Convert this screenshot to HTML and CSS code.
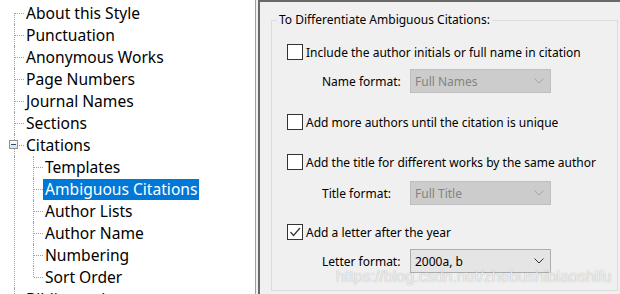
FILE: index.html
```html
<!DOCTYPE html>
<html lang="en">
<head>
  <meta charset="UTF-8">
  <title>Citations - Ambiguous Citations</title>
  <link rel="stylesheet" href="styles.css">
</head>
<body>

<div class="window">
  <div class="tree">
    <ul class="nodes root">
      <li class="node first"><span class="stub"></span><span class="label">About this Style</span></li>
      <li class="node"><span class="stub"></span><span class="label">Punctuation</span></li>
      <li class="node"><span class="stub"></span><span class="label">Anonymous Works</span></li>
      <li class="node"><span class="stub"></span><span class="label">Page Numbers</span></li>
      <li class="node"><span class="stub"></span><span class="label">Journal Names</span></li>
      <li class="node"><span class="stub"></span><span class="label">Sections</span></li>
      <li class="node"><span class="toggle"></span><span class="stub"></span><span class="label">Citations</span></li>
      <li class="branch">
        <ul class="nodes children">
          <li class="node"><span class="stub"></span><span class="label">Templates</span></li>
          <li class="node selected"><span class="stub"></span><span class="label">Ambiguous Citations</span></li>
          <li class="node"><span class="stub"></span><span class="label">Author Lists</span></li>
          <li class="node"><span class="stub"></span><span class="label">Author Name</span></li>
          <li class="node"><span class="stub"></span><span class="label">Numbering</span></li>
          <li class="node last"><span class="stub"></span><span class="label">Sort Order</span></li>
        </ul>
      </li>
      <li class="node"><span class="stub"></span><span class="label">Bibliography</span></li>
    </ul>
  </div>

  <div class="options">
    <fieldset class="group">
      <legend>To Differentiate Ambiguous Citations:</legend>
      <div class="rows">
        <label class="check row-initials">
          <span class="box"></span>
          <span>Include the author initials or full name in citation</span>
        </label>
        <div class="field row-name">
          <span class="field-label">Name format:</span>
          <div class="select disabled"><span>Full Names</span><svg width="10" height="6" viewBox="0 0 10 6"><polyline points="0.5,0.5 5,5 9.5,0.5" fill="none" stroke="currentColor"/></svg></div>
        </div>
        <label class="check row-authors">
          <span class="box"></span>
          <span>Add more authors until the citation is unique</span>
        </label>
        <label class="check row-title">
          <span class="box"></span>
          <span>Add the title for different works by the same author</span>
        </label>
        <div class="field row-titlefmt">
          <span class="field-label">Title format:</span>
          <div class="select disabled"><span>Full Title</span><svg width="10" height="6" viewBox="0 0 10 6"><polyline points="0.5,0.5 5,5 9.5,0.5" fill="none" stroke="currentColor"/></svg></div>
        </div>
        <label class="check row-letter">
          <span class="box"><svg width="14" height="14" viewBox="0 0 14 14"><polyline points="2.5,7 5.5,10.5 12,3" fill="none" stroke="#333" stroke-width="1.2"/></svg></span>
          <span>Add a letter after the year</span>
        </label>
        <div class="field row-letterfmt">
          <span class="field-label">Letter format:</span>
          <div class="select"><span>2000a, b</span><svg width="10" height="6" viewBox="0 0 10 6"><polyline points="0.5,0.5 5,5 9.5,0.5" fill="none" stroke="currentColor"/></svg></div>
        </div>
      </div>
    </fieldset>
    <div class="watermark">https://blog.csdn.net/zhebushibiaoshifu</div>
  </div>
</div>

</body>
</html>
```

FILE: styles.css
```css
body {
  margin: 0;
  background: #f0f0f0;
  font-family: 'Noto Sans', 'Open Sans', sans-serif;
  color: #000;
}

.window {
  display: flex;
  width: 620px;
  height: 294px;
  overflow: hidden;
}

/* tree */
.tree {
  width: 255px;
  flex: none;
  background: #fff;
  border-right: 1px solid #a0a0a0;
  margin-right: 2px;
  font-size: 15.6px;
  overflow: hidden;
}

.nodes {
  list-style: none;
  margin: 0;
  padding: 0;
}

.root {
  margin-left: 14px;
  padding-top: 2px;
}

.children {
  margin-left: 18px;
}

.node,
.branch {
  position: relative;
  border-left: 1px dotted #a0a0a0;
}

.node {
  display: flex;
  align-items: center;
  height: 22px;
}

.node.first,
.node.last {
  border-left-color: transparent;
}

.node.first::before,
.node.last::before {
  content: '';
  position: absolute;
  left: -1px;
  border-left: 1px dotted #a0a0a0;
}

.node.first::before {
  top: 11px;
  bottom: 0;
}

.node.last::before {
  top: 0;
  height: 11px;
}

.stub {
  width: 9px;
  flex: none;
  border-top: 1px dotted #a0a0a0;
}

.label {
  padding: 0 2px;
  line-height: 21px;
  white-space: nowrap;
}

.selected .label {
  background: #0078d7;
  color: #fff;
}

.toggle {
  position: absolute;
  left: -6px;
  top: 6px;
  width: 9px;
  height: 9px;
  box-sizing: border-box;
  border: 1px solid #919191;
  background: linear-gradient(#ffffff, #dcdcdc);
  z-index: 1;
}

.toggle::after {
  content: '';
  position: absolute;
  left: 1px;
  top: 3px;
  width: 5px;
  height: 1px;
  background: #2b4a75;
}

/* options */
.options {
  flex: 1;
  position: relative;
  border-left: 2px solid #696969;
  border-top: 2px solid #696969;
  padding: 10px 0 0 11px;
  font-size: 12px;
}

.group {
  margin: 0;
  padding: 0;
  width: 347px;
  height: 279px;
  box-sizing: border-box;
  border: 1px solid #dcdcdc;
}

.group legend {
  margin-left: 5px;
  padding: 0 2px;
  line-height: 16px;
}

.rows {
  display: flex;
  flex-direction: column;
  align-items: flex-start;
  padding-left: 15px;
}

.check {
  display: flex;
  align-items: center;
  height: 16px;
  white-space: nowrap;
}

.box {
  width: 16px;
  height: 16px;
  box-sizing: border-box;
  border: 1px solid #333;
  background: #fff;
  margin-right: 3px;
  flex: none;
}

.box svg {
  display: block;
}

.field {
  display: flex;
  align-items: center;
  margin-left: 35px;
}

.field-label {
  width: 88px;
}

.select {
  width: 141px;
  height: 24px;
  box-sizing: border-box;
  display: flex;
  align-items: center;
  justify-content: space-between;
  padding: 0 6px 0 4px;
  border: 1px solid #adadad;
  background: #e5e5e5;
  color: #000;
}

.select svg {
  color: #333;
}

.select.disabled {
  background: #cccccc;
  border-color: #bfbfbf;
  color: #838383;
}

.select.disabled svg {
  color: #a6a6a6;
}

.row-initials { margin-top: 16px; }
.row-name { margin-top: 9px; }
.row-authors { margin-top: 21px; }
.row-title { margin-top: 24px; }
.row-titlefmt { margin-top: 11px; }
.row-letter { margin-top: 19px; }
.row-letterfmt { margin-top: 9px; }

.watermark {
  position: absolute;
  left: 76px;
  top: 265px;
  font-family: 'Liberation Sans', sans-serif;
  font-size: 16px;
  line-height: 20px;
  color: rgba(255, 255, 255, 0.8);
  text-shadow: 0 0 1px rgba(0, 0, 0, 0.35);
  white-space: nowrap;
}
```
